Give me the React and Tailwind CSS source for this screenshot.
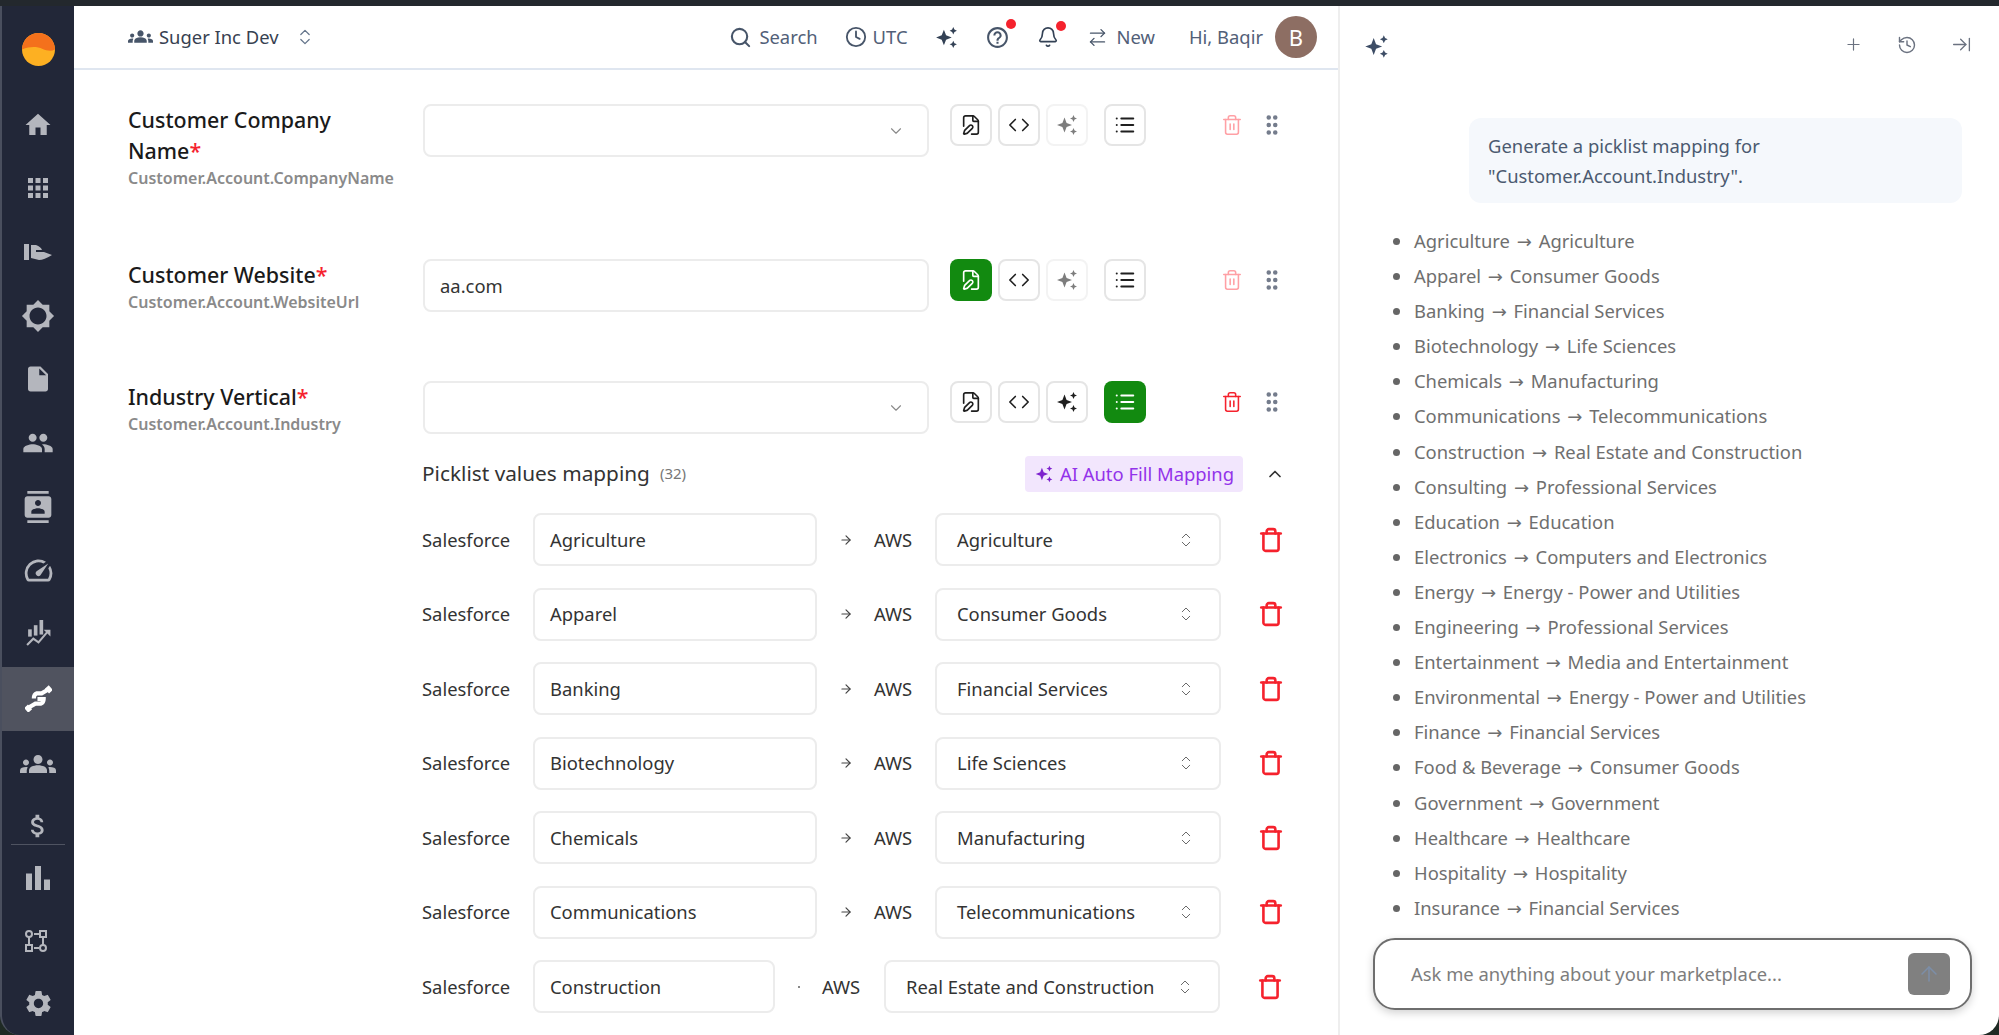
import {
  ArrowRight, ArrowRightLeft, ArrowRightToLine, ArrowUp, Bell, ChevronDown, ChevronUp, ChevronsUpDown, Clock,
  Code, FilePen, GripVertical, History, List, Plus, Search, Trash, Trash2,
} from 'lucide-react';
import {
  MdApps, MdAttachMoney, MdBarChart, MdBrightness5, MdContacts, MdGroups, MdHelpOutline, MdHome,
  MdInsertDriveFile, MdPeople, MdSettings, MdSpeed,
} from 'react-icons/md';

const Sparkles = ({ className }) => (
  <svg viewBox="0 0 24 24" fill="currentColor" className={className}>
    <path d="M9.5 4.500 11.600 9.900 17 12 11.600 14.100 9.500 19.500 7.400 14.100 2 12 7.400 9.900Z" />
    <path d="M18.5 2 19.6 4.400 22 5.500 19.6 6.600 18.5 9 17.4 6.600 15 5.500 17.4 4.400Z" />
    <path d="M18.5 15 19.6 17.400 22 18.500 19.6 19.600 18.5 22 17.4 19.600 15 18.500 17.4 17.400Z" />
  </svg>
);

const Logo = () => (
  <svg viewBox="0 0 32 32" className="w-[33px] h-[33px]">
    <circle cx="16" cy="16" r="16" fill="#fdb022" />
    <path d="M0 16A16 16 0 0 1 32 16C28 18 24 17 20 15.500C14 13 8 13 0 16Z" fill="#f4711c" />
  </svg>
);

const HandIcon = () => (
  <svg viewBox="0 0 28 16" fill="currentColor" className="w-[28px] h-[16px]">
    <rect x="0" y="0" width="5" height="16" />
    <path d="M7 1H12Q17 3 18 6H12V8H20L28 11Q20 16 15 16L7 14Z" />
  </svg>
);

const ChartIcon = () => (
  <svg viewBox="0 0 26 26" className="w-[27px] h-[27px]" fill="currentColor">
    <rect x="3" y="9" width="3.500" height="7" />
    <rect x="8.500" y="5" width="3.500" height="10" />
    <rect x="14" y="0" width="3.500" height="14" />
    <path d="M2 24 8 18 13 21.500 22 11" fill="none" stroke="currentColor" strokeWidth="2" />
    <path d="M18 9.500H24.500V16Z" />
  </svg>
);

const DealIcon = () => (
  <svg viewBox="0 0 26 26" className="w-[27px] h-[27px]" fill="none" stroke="currentColor" strokeWidth="4">
    <path d="M22 4.500 16 8H11.500Q8.500 9 8.500 13" />
    <path d="M4 21.500 10 18H15Q18 17 18 13.500H12" />
    <path d="M21 2 25 6.500M1 20.500 5 25" strokeWidth="5" />
  </svg>
);

const FlowIcon = () => (
  <svg viewBox="0 0 24 24" className="w-[24px] h-[24px]" fill="none" stroke="currentColor" strokeWidth="2">
    <circle cx="5" cy="5" r="3" />
    <rect x="16" y="2" width="6" height="6" />
    <rect x="2" y="16" width="6" height="6" />
    <circle cx="19" cy="19" r="3" />
    <path d="M10 5H15M5 8V16M10 19H15M19 8V16" />
  </svg>
);

const navItems = [
  <MdHome key="home" size={30} />,
  <MdApps key="apps" size={30} />,
  <HandIcon key="hand" />,
  <MdBrightness5 key="sun" size={34} />,
  <MdInsertDriveFile key="file" size={30} />,
  <MdPeople key="people" size={32} />,
  <MdContacts key="contacts" size={32} />,
  <MdSpeed key="speed" size={33} />,
  <ChartIcon key="chart" />,
];

const Sidebar = () => (
  <aside className="w-[74px] shrink-0 bg-[#222738] border-l-2 border-[#4a4f5e] rounded-bl-[20px] flex flex-col text-[#b4b6bd] overflow-hidden">
    <div className="h-[87px] flex items-center justify-center"><Logo /></div>
    {navItems.map((icon, i) => (
      <div key={i} className="h-[63.800px] flex items-center justify-center">{icon}</div>
    ))}
    <div className="h-[64px] mt-[1px] flex items-center justify-center bg-[#50535f] text-white"><DealIcon /></div>
    <div className="h-[66px] flex items-center justify-center"><MdGroups size={36} /></div>
    <div className="h-[48px] flex items-end justify-center pb-[3px]"><MdAttachMoney size={30} /></div>
    <div className="h-[1px] mx-[9px] bg-[#4f5361]" />
    <div className="h-[65px] flex items-center justify-center"><MdBarChart size={36} /></div>
    <div className="h-[62px] flex items-center justify-center pr-[4px]"><FlowIcon /></div>
    <div className="h-[63px] flex items-center justify-center"><MdSettings size={31} /></div>
  </aside>
);

const Header = () => (
  <header className="h-[64px] shrink-0 border-b-2 border-[#dfe6f0] flex items-center justify-between pl-[54px] pr-[21px] text-[18.400px] text-[#526078]">
    <div className="flex items-center">
      <MdGroups size={25} className="text-[#475569]" />
      <span className="ml-[6px] text-[#374151]">Suger Inc Dev</span>
      <ChevronsUpDown size={20} strokeWidth={1.500} className="ml-[16px] text-[#64748b]" />
    </div>
    <div className="flex items-center">
      <Search size={23} strokeWidth={2.200} className="text-[#475569]" />
      <span className="ml-[7px]">Search</span>
      <Clock size={22} className="ml-[27px] text-[#475569]" />
      <span className="ml-[6px]">UTC</span>
      <Sparkles className="ml-[26px] w-[25px] h-[25px] text-[#334155]" />
      <div className="relative ml-[26px]">
        <MdHelpOutline size={25} className="text-[#475569]" />
        <span className="absolute -top-[6px] -right-[6px] w-[10px] h-[10px] rounded-full bg-[#f5222d]" />
      </div>
      <div className="relative ml-[27px]">
        <Bell size={22} strokeWidth={1.800} className="text-[#334155]" />
        <span className="absolute -top-[5px] -right-[7px] w-[10px] h-[10px] rounded-full bg-[#f5222d]" />
      </div>
      <ArrowRightLeft size={21} strokeWidth={1.600} className="ml-[28px] text-[#475569]" />
      <span className="ml-[9px]">New</span>
      <span className="ml-[34px]">Hi, Baqir</span>
      <div className="ml-[12px] w-[42px] h-[42px] rounded-full bg-[#8d6e63] flex items-center justify-center text-white text-[22px]">B</div>
    </div>
  </header>
);

const IconButton = ({ active, faded, children }) => (
  <div
    className={
      active
        ? 'w-[42px] h-[42px] rounded-[8px] bg-[#128a10] text-white flex items-center justify-center'
        : faded
          ? 'w-[42px] h-[42px] rounded-[8px] border-2 border-[#f3f3f3] text-[#7d7d7d] flex items-center justify-center'
          : 'w-[42px] h-[42px] rounded-[8px] border-2 border-[#e5e5e5] text-[#1f1f1f] flex items-center justify-center'
    }
  >
    {children}
  </div>
);

const FieldRow = ({ title, path, value, fileActive, aiEnabled, listActive, trashOn, className }) => (
  <div className={'flex ' + className}>
    <div className="w-[295px] shrink-0 pr-[38px]">
      <div className="text-[21.400px] leading-[31px] font-medium text-[#1a1a1a]">
        {title}<span className="text-[#f5222d]">*</span>
      </div>
      <div className="text-[16px] leading-[20px] font-semibold text-[#8a8a8a] mt-[2px] w-[280px]">{path}</div>
    </div>
    <div className="w-[506px] h-[53px] shrink-0 border-2 border-[#ececec] rounded-[8px] flex items-center justify-between pl-[15px] pr-[22px] text-[18.400px] text-[#333]">
      <span>{value}</span>
      {!value && <ChevronDown size={18} strokeWidth={1.500} className="text-[#8a8a8a]" />}
    </div>
    <div className="flex items-start ml-[21px]">
      <IconButton active={fileActive}><FilePen size={22} strokeWidth={1.800} /></IconButton>
      <div className="ml-[6px]"><IconButton><Code size={22} strokeWidth={1.800} /></IconButton></div>
      <div className="ml-[6px]">
        <IconButton faded={!aiEnabled}><Sparkles className="w-[24px] h-[24px]" /></IconButton>
      </div>
      <div className="ml-[16px]"><IconButton active={listActive}><List size={22} strokeWidth={2.200} /></IconButton></div>
      <Trash2 size={22} strokeWidth={1.700} className={'ml-[75px] mt-[10px] ' + (trashOn ? 'text-[#f5222d]' : 'text-[#ffa0a5]')} />
      <GripVertical size={26} strokeWidth={2.200} className="ml-[16px] mt-[8px] text-[#747c8c]" />
    </div>
  </div>
);

const picklist = [
  ['Agriculture', 'Agriculture'],
  ['Apparel', 'Consumer Goods'],
  ['Banking', 'Financial Services'],
  ['Biotechnology', 'Life Sciences'],
  ['Chemicals', 'Manufacturing'],
  ['Communications', 'Telecommunications'],
  ['Construction', 'Real Estate and Construction'],
];

const boxClass = 'h-[53px] shrink-0 border-2 border-[#ececec] rounded-[8px] flex items-center';

const MappingRow = ({ from, to, narrow }) => (
  <div className="h-[53px] mb-[21.500px] flex items-center text-[18.400px] text-[#333] shrink-0">
    <span className="w-[111px] shrink-0">Salesforce</span>
    <div className={(narrow ? 'w-[242px] ' : 'w-[284px] ') + boxClass + ' pl-[15px]'}>{from}</div>
    {narrow
      ? <div className="w-[47px] shrink-0 flex justify-center"><span className="w-[2px] h-[2px] bg-[#888]" /></div>
      : <div className="w-[57px] shrink-0 flex justify-center"><ArrowRight size={14} className="text-[#444]" /></div>}
    <span className={narrow ? 'w-[62px] shrink-0' : 'w-[61px] shrink-0'}>AWS</span>
    <div className={(narrow ? 'w-[336px] ' : 'w-[286px] ') + boxClass + ' justify-between pl-[20px] pr-[24px]'}>
      <span>{to}</span>
      <ChevronsUpDown size={18} strokeWidth={1.300} className="text-[#666]" />
    </div>
    <Trash size={26} strokeWidth={2.400} className="ml-[37px] text-[#f5222d]" />
  </div>
);

const chatLines = [
  ['Agriculture', 'Agriculture'],
  ['Apparel', 'Consumer Goods'],
  ['Banking', 'Financial Services'],
  ['Biotechnology', 'Life Sciences'],
  ['Chemicals', 'Manufacturing'],
  ['Communications', 'Telecommunications'],
  ['Construction', 'Real Estate and Construction'],
  ['Consulting', 'Professional Services'],
  ['Education', 'Education'],
  ['Electronics', 'Computers and Electronics'],
  ['Energy', 'Energy - Power and Utilities'],
  ['Engineering', 'Professional Services'],
  ['Entertainment', 'Media and Entertainment'],
  ['Environmental', 'Energy - Power and Utilities'],
  ['Finance', 'Financial Services'],
  ['Food & Beverage', 'Consumer Goods'],
  ['Government', 'Government'],
  ['Healthcare', 'Healthcare'],
  ['Hospitality', 'Hospitality'],
  ['Insurance', 'Financial Services'],
];

const ChatPanel = () => (
  <section className="flex-1 min-w-0 border-l-2 border-[#eeeeee] rounded-br-[20px] bg-white flex flex-col overflow-hidden">
    <div className="h-[112px] shrink-0 flex items-start justify-between pt-[27px] pl-[23px] pr-[27px]">
      <Sparkles className="w-[27px] h-[27px] text-[#3d4d66]" />
      <div className="flex items-center gap-[34px] text-[#6b7280] pt-[1px]">
        <Plus size={19} strokeWidth={1.500} />
        <History size={20} strokeWidth={1.700} />
        <ArrowRightToLine size={21} strokeWidth={1.500} />
      </div>
    </div>
    <div className="ml-[129px] mr-[37px] h-[85px] shrink-0 rounded-[12px] bg-[#f5f8fc] px-[19px] py-[13px] text-[18.400px] leading-[30px] text-[#4b5a70]">
      Generate a picklist mapping for<br />"Customer.Account.Industry".
    </div>
    <ul className="mt-[20px] pl-[73px] list-disc marker:text-[#666] text-[18.400px] leading-[35.100px] text-[#6f6f6f] shrink-0">
      {chatLines.map(([from, to]) => (
        <li key={from} className="pl-[1px]">
          {from} <span className="mx-[2px] font-['DejaVu_Sans',sans-serif] text-[18px] leading-[0px]">→</span> {to}
        </li>
      ))}
    </ul>
    <div className="mt-[13px] ml-[33px] mr-[27px] h-[72px] shrink-0 border-2 border-[#6e6e6e] rounded-[22px] shadow-[0_3px_8px_rgba(0,0,0,0.18)] flex items-center justify-between pl-[36px] pr-[20px] text-[18.400px] text-[#7d7d7d]">
      <span>Ask me anything about your marketplace...</span>
      <div className="w-[42px] h-[42px] rounded-[6px] bg-[#808080] flex items-center justify-center text-[#7c8ea8]">
        <ArrowUp size={24} strokeWidth={1.500} />
      </div>
    </div>
  </section>
);

const App = () => {
  return (
    <div className="h-screen w-full overflow-hidden bg-[#1f2a24] flex flex-col font-['Noto_Sans','Open_Sans',sans-serif]">
      <div className="h-[6px] shrink-0 bg-[#23282d]" />
      <div className="flex-1 min-h-0 flex">
        <Sidebar />
        <main className="w-[1264px] shrink-0 bg-white flex flex-col overflow-hidden">
          <Header />
          <div className="flex-1 min-h-0 overflow-hidden pl-[54px] flex flex-col">
            <FieldRow className="mt-[34px] h-[155px] shrink-0" title="Customer Company Name" path="Customer.Account.CompanyName" />
            <FieldRow className="h-[122px] shrink-0" title="Customer Website" path="Customer.Account.WebsiteUrl" value="aa.com" fileActive />
            <FieldRow className="h-[74px] shrink-0" title="Industry Vertical" path="Customer.Account.Industry" aiEnabled listActive trashOn />
            <div className="ml-[294px] w-[876px] shrink-0 h-[37px] mb-[21px] flex items-center">
              <span className="text-[20.800px] text-[#333]">Picklist values mapping</span>
              <span className="ml-[10px] text-[15px] text-[#777]">(32)</span>
              <div className="ml-auto h-[36px] w-[218px] rounded-[4px] bg-[#f2e6fd] flex items-center justify-center gap-[6px] text-[18.400px] text-[#9333ea]">
                <Sparkles className="w-[20px] h-[20px] text-[#7e22ce]" />
                <span>AI Auto Fill Mapping</span>
              </div>
              <ChevronUp size={20} className="ml-[22px] mr-[13px] text-[#333]" />
            </div>
            <div className="ml-[294px] flex flex-col">
              {picklist.map(([from, to], i) => (
                <MappingRow key={from} from={from} to={to} narrow={i === 6} />
              ))}
              <div className="flex shrink-0">
                <div className={'ml-[111px] w-[284px] ' + boxClass} />
                <div className={'ml-[118px] w-[286px] ' + boxClass} />
              </div>
            </div>
          </div>
        </main>
        <ChatPanel />
      </div>
    </div>
  );
};

export default App;
